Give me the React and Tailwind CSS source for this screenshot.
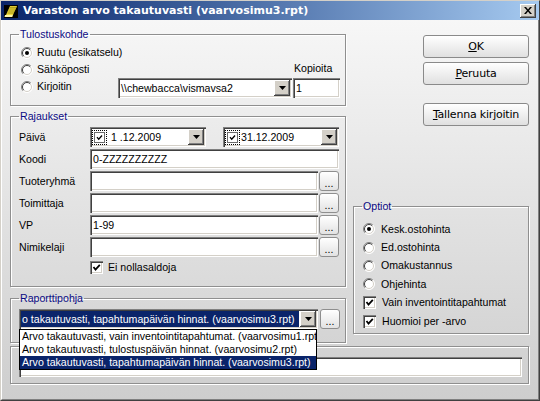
import React from "react";

const sunken =
  "shadow-[inset_1px_1px_0_#808080,inset_2px_2px_0_#404040,inset_-1px_-1px_0_#ffffff,inset_-2px_-2px_0_#d4d0c8]";
const raised =
  "shadow-[inset_-1px_-1px_0_#404040,inset_1px_1px_0_#ffffff,inset_-2px_-2px_0_#808080]";

function Field({ className = "", children }) {
  return (
    <div className={`h-[20px] bg-white flex items-center overflow-hidden whitespace-nowrap ${sunken} ${className}`}>
      {children}
    </div>
  );
}

function Arrow() {
  return (
    <div className={`w-[16px] h-[16px] shrink-0 bg-[#d4d0c8] flex items-center justify-center ${raised}`}>
      <svg width="7" height="4" viewBox="0 0 7 4">
        <path d="M0 0h7L3.5 4z" fill="#000" />
      </svg>
    </div>
  );
}

function Dots() {
  return (
    <button className="w-[20px] h-[20px] shrink-0 rounded-[3px] border border-[#8e8e8e] bg-gradient-to-b from-white to-[#e2e2e2] flex items-end justify-center pb-[2px] leading-[10px]">
      ...
    </button>
  );
}

function Radio({ checked }) {
  return (
    <svg width="12" height="12" viewBox="0 0 12 12" className="shrink-0">
      <circle cx="6" cy="6" r="5.5" fill="#fff" />
      <path d="M2.1 9.9A5.5 5.5 0 0 1 9.9 2.1" fill="none" stroke="#808080" />
      <path d="M2.8 9.2A4.5 4.5 0 0 1 9.2 2.8" fill="none" stroke="#404040" />
      <path d="M9.9 2.1A5.5 5.5 0 0 1 2.1 9.9" fill="none" stroke="#ffffff" />
      <path d="M9.2 2.8A4.5 4.5 0 0 1 2.8 9.2" fill="none" stroke="#d4d0c8" />
      {checked && <circle cx="6" cy="6" r="2" fill="#000" />}
    </svg>
  );
}

function Tick() {
  return (
    <svg width="9" height="9" viewBox="0 0 9 9">
      <path d="M1.5 4 L3.5 6.5 L7.8 1.8" fill="none" stroke="#000" strokeWidth="1.8" />
    </svg>
  );
}

function Check() {
  return (
    <div className={`w-[13px] h-[13px] shrink-0 bg-white flex items-center justify-center ${sunken}`}>
      <Tick />
    </div>
  );
}

function Group({ title, className = "", children }) {
  return (
    <fieldset className={`border border-[#8f8f8f] shadow-[1px_1px_0_#ffffff,inset_1px_1px_0_#ffffff] ${className}`}>
      {title && (
        <legend className="ml-[8px] px-[1px] leading-[13px] text-[#0a0a84]">{title}</legend>
      )}
      {children}
    </fieldset>
  );
}

function Btn({ u, rest, className = "" }) {
  return (
    <button
      className={`h-[23px] w-[106px] rounded-[3px] border border-[#8a8a8a] bg-gradient-to-b from-white to-[#e0e0e0] font-['DejaVu_Sans',sans-serif] text-[11px] tracking-[-0.2px] leading-[13px] ${className}`}
    >
      <span className="underline underline-offset-[1px]">{u}</span>
      {rest}
    </button>
  );
}

function DatePick({ text, gap }) {
  return (
    <Field className="w-[116px] pl-[2px] pr-[2px]">
      <div className="w-[15px] h-[15px] border border-dotted border-black flex items-center justify-center">
        <div className="w-[11px] h-[11px] border border-[#6a6a6a] bg-white flex items-center justify-center">
          <svg width="7" height="7" viewBox="0 0 7 7">
            <path d="M1 3.2 L2.7 5.2 L6 1.5" fill="none" stroke="#000" strokeWidth="1.3" />
          </svg>
        </div>
      </div>
      <span className={`flex-1 ${gap}`}>{text}</span>
      <Arrow />
    </Field>
  );
}

function Row({ label, children }) {
  return (
    <div className="flex items-center h-[20px]">
      <span className="w-[71px]">{label}</span>
      {children}
    </div>
  );
}

function LookupRow({ label, value = "" }) {
  return (
    <Row label={label}>
      <Field className="w-[228px] pl-[3px]">{value}</Field>
      <div className="ml-[1px]">
        <Dots />
      </div>
    </Row>
  );
}

const reports = [
  "Arvo takautuvasti, vain inventointitapahtumat. (vaarvosimu1.rpt)",
  "Arvo takautuvasti, tulostuspäivän hinnat. (vaarvosimu2.rpt)",
  "Arvo takautuvasti, tapahtumapäivän hinnat. (vaarvosimu3.rpt)",
];

export default function App() {
  return (
    <div className="w-[540px] h-[401px] flex flex-col border border-t-[#d4d0c8] border-l-[#d4d0c8] border-r-[#404040] border-b-[#404040] bg-[#d4d0c8] font-['Liberation_Sans',Arial,sans-serif] text-[10.6px] leading-[13px] text-black overflow-hidden">
      <div className="h-[19px] shrink-0 flex items-center bg-gradient-to-r from-[#0a246a] to-[#a6caf0] pl-[2px] pr-[3px]">
        <svg width="16" height="16" viewBox="0 0 16 16">
          <rect x="1" y="2" width="14" height="13" fill="#000" />
          <path d="M3 12 L7 3 L14 3 L10 12 Z" fill="#f1dc3c" />
          <path d="M4.4 10 L11 10 M5.3 8 L11.9 8 M6.2 6 L12.8 6 M7 4.3 L13.5 4.3" stroke="#8d7f0c" strokeWidth="0.8" />
          <path d="M2 12 L10 12 L9.3 14 L1.5 14 Z" fill="#fff7a8" />
        </svg>
        <span className="ml-[4px] text-white font-bold font-['DejaVu_Sans',sans-serif] text-[11px] leading-[13px] whitespace-nowrap">
          Varaston arvo takautuvasti (vaarvosimu3.rpt)
        </span>
        <div className={`ml-auto w-[16px] h-[14px] bg-[#d4d0c8] flex items-center justify-center ${raised}`}>
          <svg width="8" height="7" viewBox="0 0 8 7">
            <path d="M0 0H2L4 2.5 6 0H8L5 3.5 8 7H6L4 4.5 2 7H0L3 3.5Z" fill="#000" />
          </svg>
        </div>
      </div>

      <div className="flex-1 flex flex-col border-l border-r border-b border-l-white border-r-[#808080] border-b-[#808080] bg-gradient-to-b from-[#f7f7f7] to-[#cecece] pl-[8px] pt-[8px]">
        <div className="flex">
          <div className="w-[336px] flex flex-col">
            <Group title="Tulostuskohde">
              <div className="flex pt-[3px] pb-[7px]">
                <div className="w-[107px] pl-[10px] flex flex-col">
                  <div className="h-[17px] flex items-center gap-[4px] whitespace-nowrap">
                    <Radio checked />
                    <span>Ruutu (esikatselu)</span>
                  </div>
                  <div className="h-[17px] flex items-center gap-[4px]">
                    <Radio />
                    <span>Sähköposti</span>
                  </div>
                  <div className="h-[17px] flex items-center gap-[4px]">
                    <Radio />
                    <span>Kirjoitin</span>
                  </div>
                </div>
                <div className="pt-[34px]">
                  <Field className="w-[174px] pl-[3px] pr-[2px]">
                    <span className="flex-1">{"\\\\chewbacca\\vismavsa2"}</span>
                    <Arrow />
                  </Field>
                </div>
                <div className="ml-[1px] w-[47px] pt-[18px] flex flex-col">
                  <span className="pl-[1px]">Kopioita</span>
                  <Field className="mt-[3px] pl-[3px]">1</Field>
                </div>
              </div>
            </Group>

            <Group title="Rajaukset" className="mt-[4px]">
              <div className="pl-[8px] pt-[4px] pb-[12px] flex flex-col gap-[2px]">
                <Row label="Päivä">
                  <DatePick text="1 .12.2009" gap="ml-[4px]" />
                  <div className="ml-[17px]">
                    <DatePick text="31.12.2009" gap="ml-[1px]" />
                  </div>
                </Row>
                <Row label="Koodi">
                  <Field className="w-[249px] pl-[3px]">0-ZZZZZZZZZZ</Field>
                </Row>
                <LookupRow label="Tuoteryhmä" />
                <LookupRow label="Toimittaja" />
                <LookupRow label="VP" value="1-99" />
                <LookupRow label="Nimikelaji" />
                <div className="flex items-center h-[13px] mt-[2px] pl-[71px] gap-[5px]">
                  <Check />
                  <span>Ei nollasaldoja</span>
                </div>
              </div>
            </Group>

            <Group title="Raporttipohja" className="mt-[5px]">
              <div className="pl-[8px] pt-[4px] pb-[13px] flex">
                <div className="relative">
                  <Field className="w-[299px] pl-[2px] pr-[2px]">
                    <span className="flex-1 h-[16px] mr-[1px] bg-[#0a246a] text-white pl-[1px] leading-[16px] overflow-hidden">
                      o takautuvasti, tapahtumapäivän hinnat. (vaarvosimu3.rpt)
                    </span>
                    <Arrow />
                  </Field>
                  <div className="absolute z-10 left-0 top-[20px] w-[298px] border border-black bg-white whitespace-nowrap overflow-hidden">
                    {reports.map((r, i) => (
                      <div
                        key={i}
                        className={`h-[13px] leading-[13px] pl-[2px] ${i === 2 ? "bg-[#0a246a] text-white" : ""}`}
                      >
                        {r}
                      </div>
                    ))}
                  </div>
                </div>
                <div className="ml-[2px]">
                  <Dots />
                </div>
              </div>
            </Group>
          </div>

          <div className="ml-[7px] w-[176px] flex flex-col">
            <Btn u="O" rest="K" className="mt-[7px] ml-[70px]" />
            <Btn u="P" rest="eruuta" className="mt-[4px] ml-[70px]" />
            <Btn u="T" rest="allenna kirjoitin" className="mt-[18px] ml-[70px]" />
            <Group title="Optiot" className="mt-[74px]">
              <div className="pl-[9px] pt-[7px] pb-[3px] flex flex-col">
                {["Kesk.ostohinta", "Ed.ostohinta", "Omakustannus", "Ohjehinta"].map((t, i) => (
                  <div key={t} className="h-[18.4px] flex items-center gap-[6px]">
                    <Radio checked={i === 0} />
                    <span>{t}</span>
                  </div>
                ))}
                {["Vain inventointitapahtumat", "Huomioi per -arvo"].map((t) => (
                  <div key={t} className="h-[18.4px] flex items-center gap-[6px]">
                    <Check />
                    <span>{t}</span>
                  </div>
                ))}
              </div>
            </Group>
          </div>
        </div>

        <Group className="mt-[3px] w-[519px]">
          <div className="pl-[8px] pr-[6px] pt-[10px] pb-[6px]">
            <Field />
          </div>
        </Group>
      </div>
    </div>
  );
}
